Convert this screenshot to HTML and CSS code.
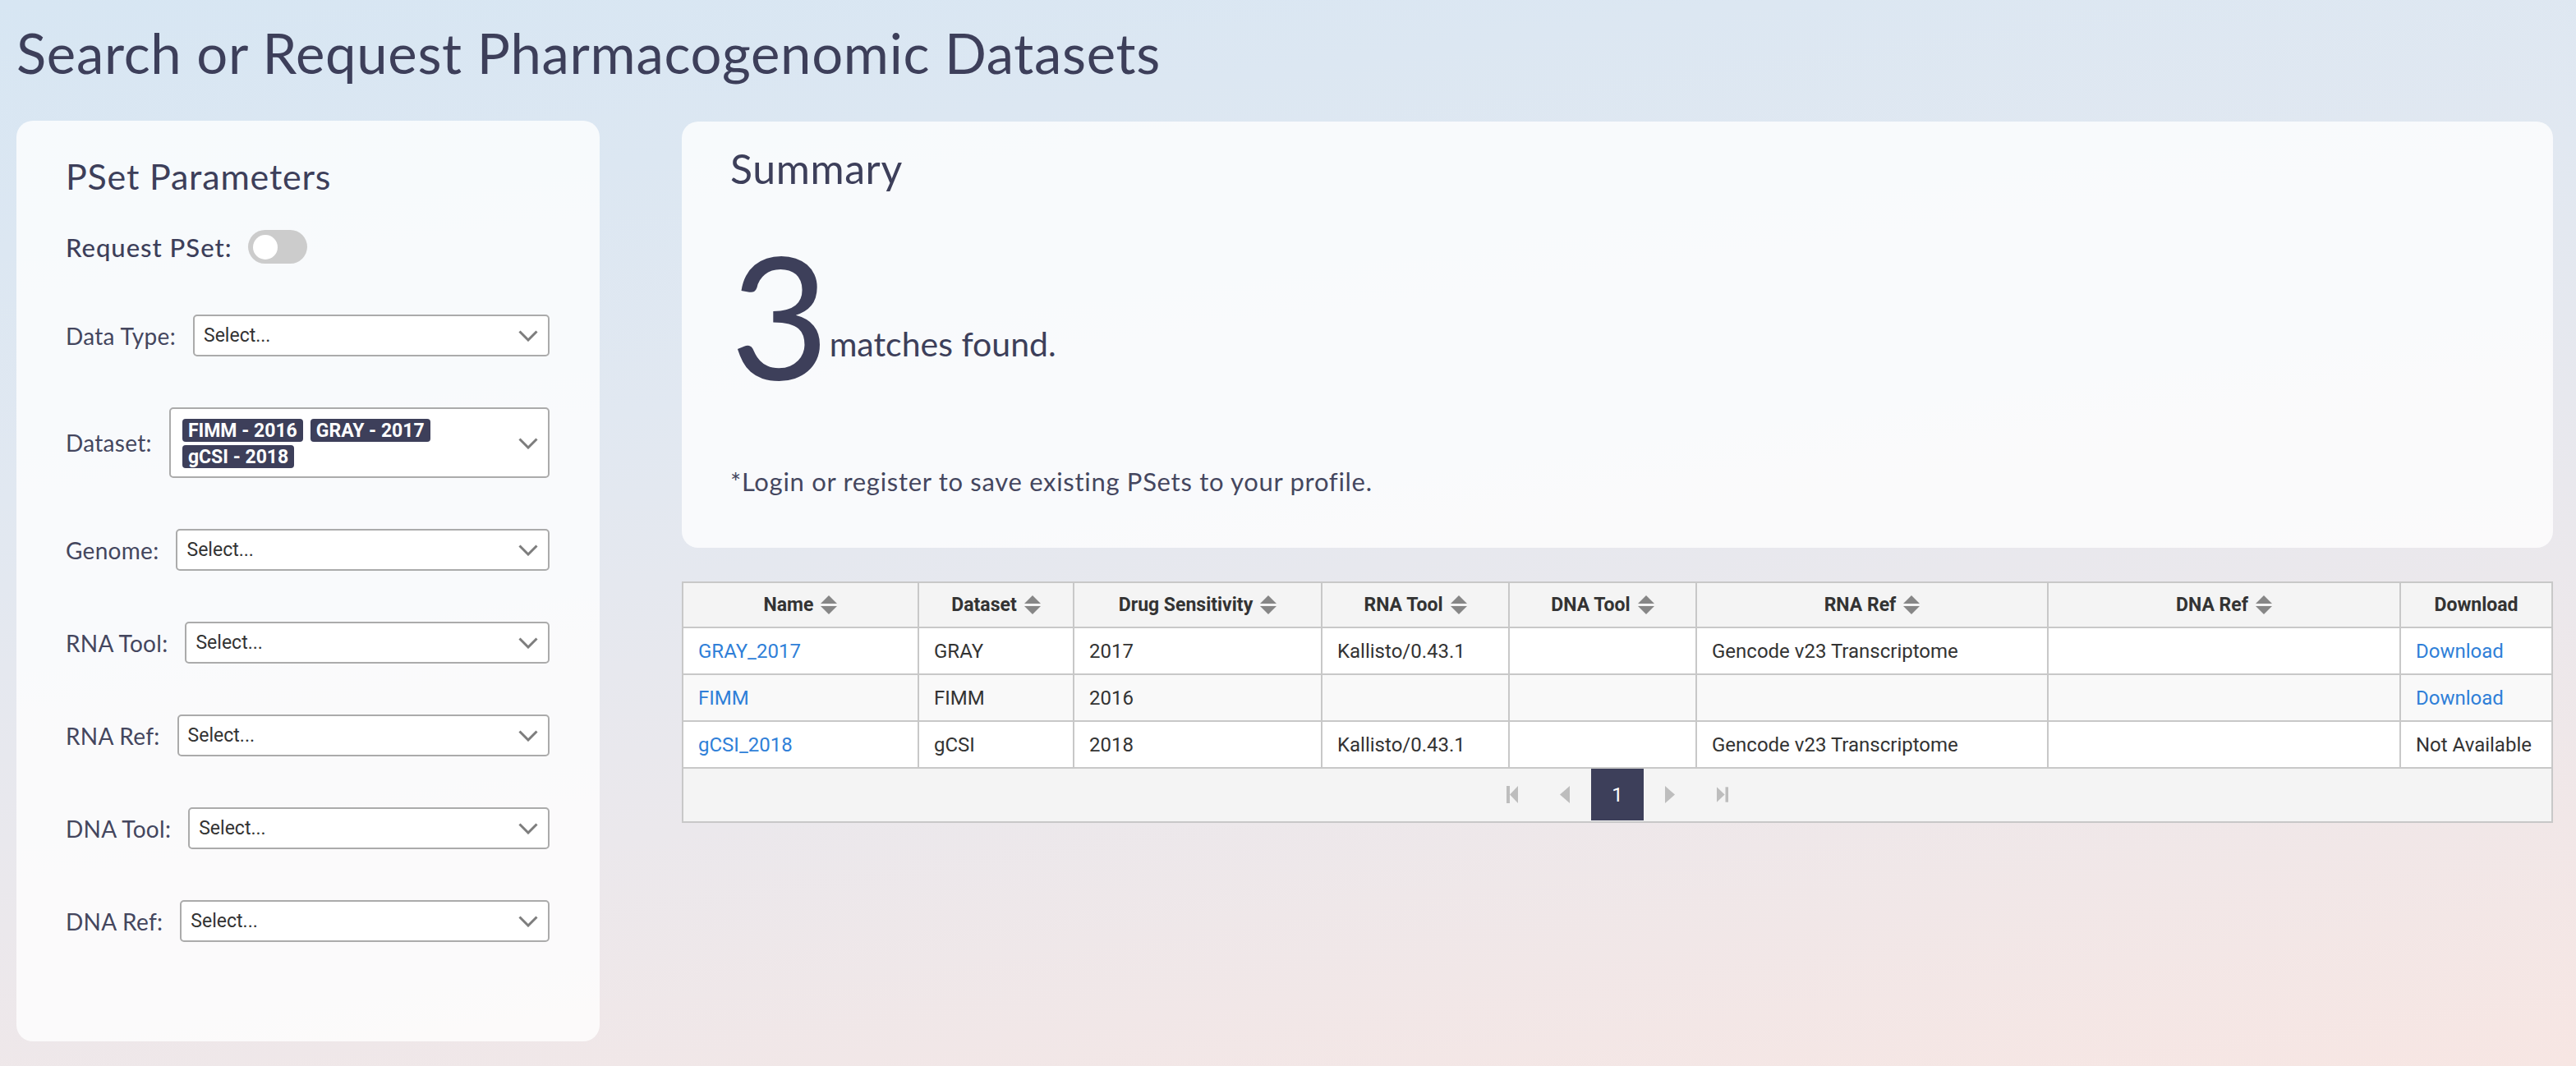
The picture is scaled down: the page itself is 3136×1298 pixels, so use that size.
FILE: index.html
```html
<!DOCTYPE html>
<html lang="en">
<head>
<meta charset="utf-8">
<title>Search or Request Pharmacogenomic Datasets</title>
<link rel="stylesheet" href="styles.css">
</head>
<body>
<div class="page">
  <h1 class="title">Search or Request Pharmacogenomic Datasets</h1>
  <div class="layout">
    <section class="card params">
      <h2 class="card-title">PSet Parameters</h2>
      <div class="toggle-row">
        <span class="toggle-label">Request PSet:</span>
        <span class="toggle"><span class="knob"></span></span>
      </div>
      <div class="form-rows">
        <div class="form-row">
          <span class="label">Data Type:</span>
          <div class="select"><span class="placeholder">Select...</span><svg class="chev" viewBox="0 0 24 14"><polyline points="1.5,1.5 12,12 22.5,1.5"/></svg></div>
        </div>
        <div class="form-row">
          <span class="label">Dataset:</span>
          <div class="select multi">
            <div class="tags"><span class="tag">FIMM - 2016</span><span class="tag">GRAY - 2017</span><span class="tag">gCSI - 2018</span></div>
            <svg class="chev" viewBox="0 0 24 14"><polyline points="1.5,1.5 12,12 22.5,1.5"/></svg>
          </div>
        </div>
        <div class="form-row">
          <span class="label">Genome:</span>
          <div class="select"><span class="placeholder">Select...</span><svg class="chev" viewBox="0 0 24 14"><polyline points="1.5,1.5 12,12 22.5,1.5"/></svg></div>
        </div>
        <div class="form-row">
          <span class="label">RNA Tool:</span>
          <div class="select"><span class="placeholder">Select...</span><svg class="chev" viewBox="0 0 24 14"><polyline points="1.5,1.5 12,12 22.5,1.5"/></svg></div>
        </div>
        <div class="form-row">
          <span class="label">RNA Ref:</span>
          <div class="select"><span class="placeholder">Select...</span><svg class="chev" viewBox="0 0 24 14"><polyline points="1.5,1.5 12,12 22.5,1.5"/></svg></div>
        </div>
        <div class="form-row">
          <span class="label">DNA Tool:</span>
          <div class="select"><span class="placeholder">Select...</span><svg class="chev" viewBox="0 0 24 14"><polyline points="1.5,1.5 12,12 22.5,1.5"/></svg></div>
        </div>
        <div class="form-row">
          <span class="label">DNA Ref:</span>
          <div class="select"><span class="placeholder">Select...</span><svg class="chev" viewBox="0 0 24 14"><polyline points="1.5,1.5 12,12 22.5,1.5"/></svg></div>
        </div>
      </div>
    </section>

    <div class="right">
      <section class="card summary">
        <h2 class="summary-title">Summary</h2>
        <div class="count-line"><span class="count">3</span><span class="count-text">matches found.</span></div>
        <p class="note">*Login or register to save existing PSets to your profile.</p>
      </section>

      <div class="table-wrap">
        <table class="data">
          <colgroup>
            <col class="c-name"><col class="c-dataset"><col class="c-drug"><col class="c-rnatool"><col class="c-dnatool"><col class="c-rnaref"><col class="c-dnaref"><col class="c-dl">
          </colgroup>
          <thead>
            <tr>
              <th><span class="th-in">Name<svg class="sort" viewBox="0 0 20 23"><polygon points="10,0 20,10 0,10"/><polygon points="0,13 20,13 10,23"/></svg></span></th>
              <th><span class="th-in">Dataset<svg class="sort" viewBox="0 0 20 23"><polygon points="10,0 20,10 0,10"/><polygon points="0,13 20,13 10,23"/></svg></span></th>
              <th><span class="th-in">Drug Sensitivity<svg class="sort" viewBox="0 0 20 23"><polygon points="10,0 20,10 0,10"/><polygon points="0,13 20,13 10,23"/></svg></span></th>
              <th><span class="th-in">RNA Tool<svg class="sort" viewBox="0 0 20 23"><polygon points="10,0 20,10 0,10"/><polygon points="0,13 20,13 10,23"/></svg></span></th>
              <th><span class="th-in">DNA Tool<svg class="sort" viewBox="0 0 20 23"><polygon points="10,0 20,10 0,10"/><polygon points="0,13 20,13 10,23"/></svg></span></th>
              <th><span class="th-in">RNA Ref<svg class="sort" viewBox="0 0 20 23"><polygon points="10,0 20,10 0,10"/><polygon points="0,13 20,13 10,23"/></svg></span></th>
              <th><span class="th-in">DNA Ref<svg class="sort" viewBox="0 0 20 23"><polygon points="10,0 20,10 0,10"/><polygon points="0,13 20,13 10,23"/></svg></span></th>
              <th><span class="th-in">Download</span></th>
            </tr>
          </thead>
          <tbody>
            <tr>
              <td><a class="link" href="#">GRAY_2017</a></td>
              <td>GRAY</td>
              <td>2017</td>
              <td>Kallisto/0.43.1</td>
              <td></td>
              <td>Gencode v23 Transcriptome</td>
              <td></td>
              <td><a class="link" href="#">Download</a></td>
            </tr>
            <tr class="alt">
              <td><a class="link" href="#">FIMM</a></td>
              <td>FIMM</td>
              <td>2016</td>
              <td></td>
              <td></td>
              <td></td>
              <td></td>
              <td><a class="link" href="#">Download</a></td>
            </tr>
            <tr>
              <td><a class="link" href="#">gCSI_2018</a></td>
              <td>gCSI</td>
              <td>2018</td>
              <td>Kallisto/0.43.1</td>
              <td></td>
              <td>Gencode v23 Transcriptome</td>
              <td></td>
              <td>Not Available</td>
            </tr>
          </tbody>
        </table>
        <div class="paginator">
          <span class="pg-btn"><svg class="pg-icon" viewBox="0 0 14 21"><rect x="0" y="0" width="4" height="21"/><polygon points="14,0 14,21 4,10.5"/></svg></span>
          <span class="pg-btn"><svg class="pg-icon small" viewBox="0 0 12 21"><polygon points="12,0 12,21 0,10.5"/></svg></span>
          <span class="pg-btn active">1</span>
          <span class="pg-btn"><svg class="pg-icon small" viewBox="0 0 12 21"><polygon points="0,0 0,21 12,10.5"/></svg></span>
          <span class="pg-btn"><svg class="pg-icon" viewBox="0 0 16 21"><polygon points="0,0 0,21 11,10.5"/><rect x="12" y="0" width="4" height="21"/></svg></span>
        </div>
      </div>
    </div>
  </div>
</div>
</body>
</html>
```

FILE: styles.css
```css
html, body {
  margin: 0;
  padding: 0;
}

body {
  min-height: 100vh;
  background: linear-gradient(172deg, #d7e6f3 0%, #e1e8f1 35%, #ebe8ec 65%, #f7e6e3 100%);
  font-family: "Lato", "Noto Sans", sans-serif;
  color: #3d3f5a;
}

.page {
  padding: 24px 29px 0 20px;
}

.title {
  margin: 0 0 43px;
  font-size: 67px;
  font-weight: 400;
  line-height: 80px;
  color: #3d3f5a;
  letter-spacing: 0.7px;
}

.layout {
  display: grid;
  grid-template-columns: 710px 1fr;
  column-gap: 100px;
  align-items: start;
}

.card {
  background: rgba(255, 255, 255, 0.78);
  border-radius: 20px;
  box-sizing: border-box;
}

/* Left parameters card */
.params {
  padding: 43px 61px 121px 60px;
}

.card-title {
  margin: 0 0 40px;
  font-size: 43px;
  font-weight: 400;
  line-height: 50px;
  letter-spacing: 0.8px;
  color: #3d3f5a;
}

.toggle-row {
  display: flex;
  align-items: center;
  height: 41px;
  gap: 20px;
}

.toggle-label {
  font-size: 31px;
  font-weight: 500;
  letter-spacing: 1px;
  color: #3d3f5a;
}

.toggle {
  display: flex;
  align-items: center;
  box-sizing: border-box;
  width: 72px;
  height: 41px;
  padding-left: 6px;
  border-radius: 21px;
  background: #cccccc;
}

.knob {
  width: 30px;
  height: 30px;
  border-radius: 50%;
  background: #ffffff;
}

.form-rows {
  display: flex;
  flex-direction: column;
  gap: 62px;
  margin-top: 62px;
}

.form-row {
  display: flex;
  align-items: center;
  gap: 21px;
}

.label {
  flex: none;
  font-size: 28px;
  font-weight: 400;
  letter-spacing: 0.3px;
  color: #44465e;
  white-space: nowrap;
}

.select {
  flex: 1;
  display: flex;
  align-items: center;
  justify-content: space-between;
  box-sizing: border-box;
  height: 51px;
  padding: 0 12px 0 11px;
  background: #ffffff;
  border: 2px solid #ababab;
  border-radius: 5px;
  font-family: "Roboto", "Liberation Sans", sans-serif;
}

.select.multi {
  height: 86px;
  padding: 12px 12px 10px 14px;
}

.placeholder {
  font-size: 23px;
  color: #333333;
}

.chev {
  flex: none;
  width: 24px;
  height: 14px;
  fill: none;
  stroke: #7d7d7d;
  stroke-width: 3;
}

.tags {
  display: flex;
  flex-wrap: wrap;
  gap: 4px 9px;
  width: 340px;
}

.tag {
  display: inline-flex;
  align-items: center;
  height: 28px;
  padding: 0 7px;
  border-radius: 4px;
  background: #3d3f5a;
  color: #ffffff;
  font-size: 23px;
  font-weight: 700;
}

/* Right column */
.right {
  display: flex;
  flex-direction: column;
  gap: 41px;
  padding-top: 1px;
}

.summary {
  padding: 28px 60px 62px 59px;
}

.summary-title {
  margin: 0;
  font-size: 50px;
  font-weight: 400;
  line-height: 58px;
  letter-spacing: 0.6px;
  color: #3d3f5a;
}

.count-line {
  margin-top: 44px;
  line-height: 1;
}

.count {
  font-size: 208px;
  font-weight: 400;
  line-height: 1;
  color: #3d3f5a;
}

.count-text {
  margin-left: 0;
  font-size: 41px;
  font-weight: 400;
  vertical-align: 28px;
  color: #3d3f5a;
}

.note {
  margin: 82px 0 0;
  font-size: 31px;
  line-height: 37px;
  letter-spacing: 0.7px;
  color: #45475f;
}

/* Table */
.table-wrap {
  font-family: "Roboto", "Liberation Sans", sans-serif;
}

.data {
  width: 100%;
  table-layout: fixed;
  border-collapse: collapse;
  font-size: 24px;
  color: #333333;
}

.c-name { width: 287px; }
.c-dataset { width: 189px; }
.c-drug { width: 302px; }
.c-rnatool { width: 228px; }
.c-dnatool { width: 228px; }
.c-rnaref { width: 428px; }
.c-dnaref { width: 429px; }
.c-dl { width: 185px; }

.data th,
.data td {
  border: 2px solid #c8c8c8;
  padding: 0 18px;
  text-align: left;
  white-space: nowrap;
  overflow: hidden;
}

.data th {
  height: 53px;
  background: #f4f4f4;
  font-size: 23px;
  font-weight: 700;
  text-align: center;
  color: #333333;
}

.data td {
  height: 55px;
  background: #ffffff;
}

.data tr.alt td {
  background: #f9f9f9;
}

.th-in {
  display: inline-flex;
  align-items: center;
  gap: 9px;
}

.sort {
  width: 20px;
  height: 23px;
  fill: #868686;
}

.link {
  color: #2f7fd8;
  text-decoration: none;
}

.paginator {
  display: flex;
  justify-content: center;
  height: 64px;
  background: #f4f4f4;
  border: 2px solid #c8c8c8;
  border-top: none;
}

.pg-btn {
  display: flex;
  align-items: center;
  justify-content: center;
  width: 64px;
  height: 63px;
  font-size: 24px;
  color: #ffffff;
}

.pg-btn.active {
  background: #3d3f5a;
}

.pg-icon {
  width: 14px;
  height: 21px;
  fill: #bdbdbd;
}

.pg-icon.small {
  width: 12px;
}
```
